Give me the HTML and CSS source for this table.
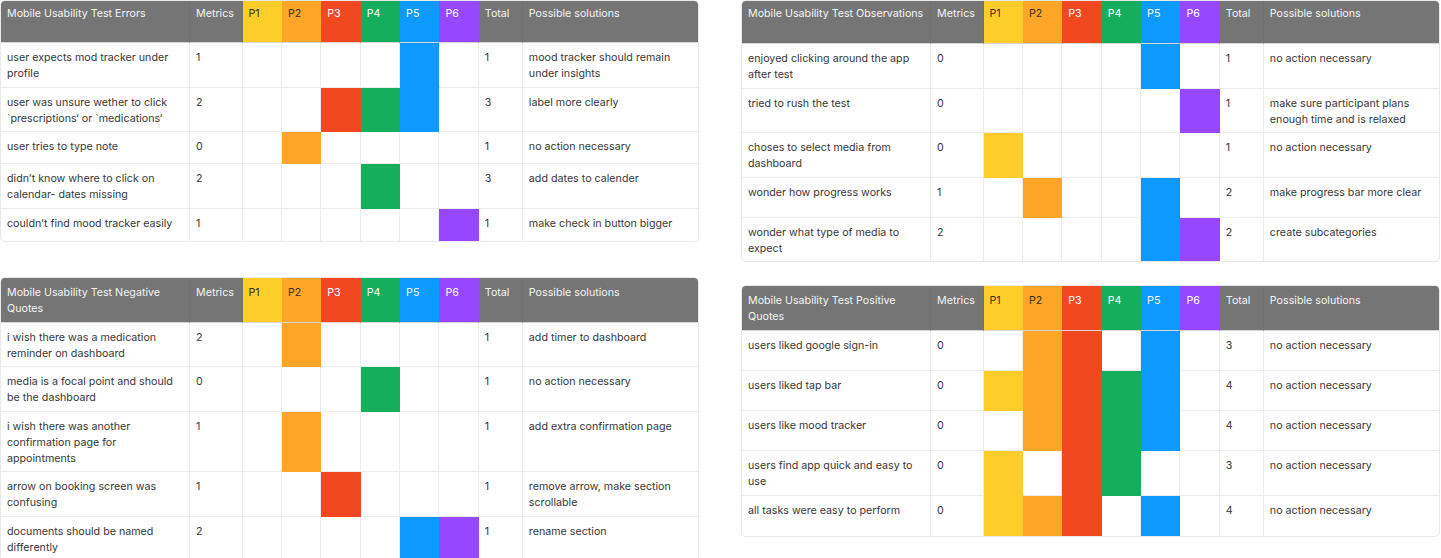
FILE: index.html
```html
<!DOCTYPE html>
<html lang="en">
<head>
<meta charset="utf-8">
<title>Mobile Usability Test</title>
<link rel="stylesheet" href="styles.css">
</head>
<body>
<div class="page">
  <div class="col col-left">
    <div class="tbl t-errors">
      <div class="h">Mobile Usability Test Errors</div><div class="h">Metrics</div><div class="h p1">P1</div><div class="h p2">P2</div><div class="h p3">P3</div><div class="h p4">P4</div><div class="h p5">P5</div><div class="h p6">P6</div><div class="h">Total</div><div class="h">Possible solutions</div>
      <div class="c">user expects mod tracker under profile</div><div class="c">1</div><div class="c"></div><div class="c"></div><div class="c"></div><div class="c"></div><div class="c p5"></div><div class="c"></div><div class="c">1</div><div class="c">mood tracker should remain under insights</div>
      <div class="c">user was unsure wether to click `prescriptions‘ or `medications‘</div><div class="c">2</div><div class="c"></div><div class="c"></div><div class="c p3"></div><div class="c p4"></div><div class="c p5"></div><div class="c"></div><div class="c">3</div><div class="c">label more clearly</div>
      <div class="c">user tries to type note</div><div class="c">0</div><div class="c"></div><div class="c p2"></div><div class="c"></div><div class="c"></div><div class="c"></div><div class="c"></div><div class="c">1</div><div class="c">no action necessary</div>
      <div class="c">didn’t know where to click on calendar- dates missing</div><div class="c">2</div><div class="c"></div><div class="c"></div><div class="c"></div><div class="c p4"></div><div class="c"></div><div class="c"></div><div class="c">3</div><div class="c">add dates to calender</div>
      <div class="c">couldn’t find mood tracker easily</div><div class="c">1</div><div class="c"></div><div class="c"></div><div class="c"></div><div class="c"></div><div class="c"></div><div class="c p6"></div><div class="c">1</div><div class="c">make check in button bigger</div>
    </div>
    <div class="tbl t-negative">
      <div class="h">Mobile Usability Test Negative Quotes</div><div class="h">Metrics</div><div class="h p1">P1</div><div class="h p2">P2</div><div class="h p3">P3</div><div class="h p4">P4</div><div class="h p5">P5</div><div class="h p6">P6</div><div class="h">Total</div><div class="h">Possible solutions</div>
      <div class="c">i wish there was a medication reminder on dashboard</div><div class="c">2</div><div class="c"></div><div class="c p2"></div><div class="c"></div><div class="c"></div><div class="c"></div><div class="c"></div><div class="c">1</div><div class="c">add timer to dashboard</div>
      <div class="c">media is a focal point and should be the dashboard</div><div class="c">0</div><div class="c"></div><div class="c"></div><div class="c"></div><div class="c p4"></div><div class="c"></div><div class="c"></div><div class="c">1</div><div class="c">no action necessary</div>
      <div class="c">i wish there was another confirmation page for appointments</div><div class="c">1</div><div class="c"></div><div class="c p2"></div><div class="c"></div><div class="c"></div><div class="c"></div><div class="c"></div><div class="c">1</div><div class="c">add extra confirmation page</div>
      <div class="c">arrow on booking screen was confusing</div><div class="c">1</div><div class="c"></div><div class="c"></div><div class="c p3"></div><div class="c"></div><div class="c"></div><div class="c"></div><div class="c">1</div><div class="c">remove arrow, make section scrollable</div>
      <div class="c">documents should be named differently</div><div class="c">2</div><div class="c"></div><div class="c"></div><div class="c"></div><div class="c"></div><div class="c p5"></div><div class="c p6"></div><div class="c">1</div><div class="c">rename section</div>
    </div>
  </div>
  <div class="col col-right">
    <div class="tbl t-observations">
      <div class="h">Mobile Usability Test Observations</div><div class="h">Metrics</div><div class="h p1">P1</div><div class="h p2">P2</div><div class="h p3">P3</div><div class="h p4">P4</div><div class="h p5">P5</div><div class="h p6">P6</div><div class="h">Total</div><div class="h">Possible solutions</div>
      <div class="c">enjoyed clicking around the app after test</div><div class="c">0</div><div class="c"></div><div class="c"></div><div class="c"></div><div class="c"></div><div class="c p5"></div><div class="c"></div><div class="c">1</div><div class="c">no action necessary</div>
      <div class="c">tried to rush the test</div><div class="c">0</div><div class="c"></div><div class="c"></div><div class="c"></div><div class="c"></div><div class="c"></div><div class="c p6"></div><div class="c">1</div><div class="c">make sure participant plans enough time and is relaxed</div>
      <div class="c">choses to select media from dashboard</div><div class="c">0</div><div class="c p1"></div><div class="c"></div><div class="c"></div><div class="c"></div><div class="c"></div><div class="c"></div><div class="c">1</div><div class="c">no action necessary</div>
      <div class="c">wonder how progress works</div><div class="c">1</div><div class="c"></div><div class="c p2"></div><div class="c"></div><div class="c"></div><div class="c p5"></div><div class="c"></div><div class="c">2</div><div class="c">make progress bar more clear</div>
      <div class="c">wonder what type of media to expect</div><div class="c">2</div><div class="c"></div><div class="c"></div><div class="c"></div><div class="c"></div><div class="c p5"></div><div class="c p6"></div><div class="c">2</div><div class="c">create subcategories</div>
    </div>
    <div class="tbl t-positive">
      <div class="h">Mobile Usability Test Positive Quotes</div><div class="h">Metrics</div><div class="h p1">P1</div><div class="h p2">P2</div><div class="h p3">P3</div><div class="h p4">P4</div><div class="h p5">P5</div><div class="h p6">P6</div><div class="h">Total</div><div class="h">Possible solutions</div>
      <div class="c">users liked google sign-in</div><div class="c">0</div><div class="c"></div><div class="c p2"></div><div class="c p3"></div><div class="c"></div><div class="c p5"></div><div class="c"></div><div class="c">3</div><div class="c">no action necessary</div>
      <div class="c">users liked tap bar</div><div class="c">0</div><div class="c p1"></div><div class="c p2"></div><div class="c p3"></div><div class="c p4"></div><div class="c p5"></div><div class="c"></div><div class="c">4</div><div class="c">no action necessary</div>
      <div class="c">users like mood tracker</div><div class="c">0</div><div class="c"></div><div class="c p2"></div><div class="c p3"></div><div class="c p4"></div><div class="c p5"></div><div class="c"></div><div class="c">4</div><div class="c">no action necessary</div>
      <div class="c">users find app quick and easy to use</div><div class="c">0</div><div class="c p1"></div><div class="c"></div><div class="c p3"></div><div class="c p4"></div><div class="c"></div><div class="c"></div><div class="c">3</div><div class="c">no action necessary</div>
      <div class="c">all tasks were easy to perform</div><div class="c">0</div><div class="c p1"></div><div class="c p2"></div><div class="c p3"></div><div class="c"></div><div class="c p5"></div><div class="c"></div><div class="c">4</div><div class="c">no action necessary</div>
    </div>
  </div>
</div>
</body>
</html>
```

FILE: styles.css
```css
* { box-sizing: border-box; }

html, body {
  margin: 0;
  padding: 0;
  background: #ffffff;
}

body {
  font-family: Inter, "Noto Sans", "Liberation Sans", sans-serif;
  font-size: 10.7px;
  line-height: 16px;
  color: #383838;
}

.page {
  display: flex;
  gap: 42px;
  width: 1441px;
}

.col {
  display: flex;
  flex-direction: column;
  width: 699px;
}

.col-left { gap: 35px; }
.col-right { gap: 23px; }

.tbl {
  display: grid;
  grid-template-columns: 189px 52.5px repeat(6, 39.4px) 44px 1fr;
  border: 1px solid #e9e9e9;
  border-radius: 5px;
  overflow: hidden;
  background: #ffffff;
}

.t-errors { grid-template-rows: 42px; grid-auto-rows: minmax(32px, auto); }
.t-negative { grid-template-rows: 45px; grid-auto-rows: minmax(32px, auto); }
.t-observations { grid-template-rows: 43px; grid-auto-rows: minmax(40px, auto); }
.t-positive { grid-template-rows: 45px; grid-auto-rows: minmax(40px, auto); }

.h, .c {
  padding: 7px 6px 4.5px;
  border-right: 1px solid #ececec;
  border-bottom: 1px solid #ececec;
  min-width: 0;
}

.t-errors .h, .t-observations .h { padding-top: 5px; }

.tbl > :nth-child(10n) { border-right: none; }
.tbl > :nth-last-child(-n+10) { border-bottom: none; }

.h {
  background: #757575;
  color: #f4f4f4;
  border-right-color: #717171;
  border-bottom-color: #d6d6d6;
}

.h.p1, .h.p2 { color: #3a2f12; }
.h.p3, .h.p4, .h.p5, .h.p6 { color: #ffffff; }

.p1 { background: #ffcd29; border-right-color: #ffcd29; border-bottom-color: #ffcd29; }
.p2 { background: #ffa629; border-right-color: #ffa629; border-bottom-color: #ffa629; }
.p3 { background: #f24822; border-right-color: #f24822; border-bottom-color: #f24822; }
.p4 { background: #14ae5c; border-right-color: #14ae5c; border-bottom-color: #14ae5c; }
.p5 { background: #0d99ff; border-right-color: #0d99ff; border-bottom-color: #0d99ff; }
.p6 { background: #9747ff; border-right-color: #9747ff; border-bottom-color: #9747ff; }

.h.p1, .h.p2, .h.p3, .h.p4, .h.p5, .h.p6 { border-bottom-color: #d6d6d6; }
```
